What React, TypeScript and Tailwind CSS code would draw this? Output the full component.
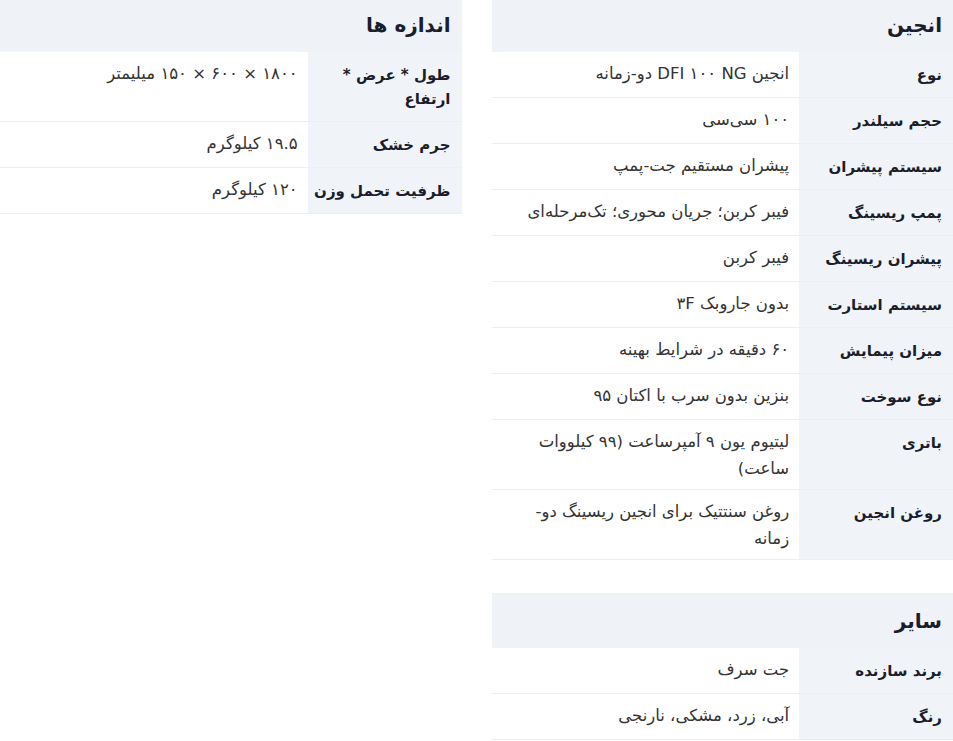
const engine = [
  ["نوع", "انجین DFI ۱۰۰ NG دو-زمانه"],
  ["حجم سیلندر", "۱۰۰ سی‌سی"],
  ["سیستم پیشران", "پیشران مستقیم جت-پمپ"],
  ["پمپ ریسینگ", "فیبر کربن؛ جریان محوری؛ تک‌مرحله‌ای"],
  ["پیشران ریسینگ", "فیبر کربن"],
  ["سیستم استارت", "بدون جاروبک ۳F"],
  ["میزان پیمایش", "۶۰ دقیقه در شرایط بهینه"],
  ["نوع سوخت", "بنزین بدون سرب با اکتان ۹۵"],
  ["باتری", "لیتیوم یون ۹ آمپرساعت (۹۹ کیلووات ساعت)"],
  ["روغن انجین", "روغن سنتتیک برای انجین ریسینگ دو-زمانه"],
];

const sizes = [
  ["طول * عرض * ارتفاع", "۱۸۰۰ × ۶۰۰ × ۱۵۰ میلیمتر"],
  ["جرم خشک", "۱۹.۵ کیلوگرم"],
  ["ظرفیت تحمل وزن", "۱۲۰ کیلوگرم"],
];

const other = [
  ["برند سازنده", "جت سرف"],
  ["رنگ", "آبی، زرد، مشکی، نارنجی"],
];

function SpecTable({ title, rows }: { title: string; rows: string[][] }) {
  return (
    <div>
      <div className="h-[55px] bg-[#eff3f8] flex items-center px-[11px]">
        <h3 className="text-[20px] font-bold text-[#1a1d2b]">{title}</h3>
      </div>
      <table className="w-full border-collapse table-fixed">
        <tbody>
          {rows.map(([k, v], i) => (
            <tr key={i} className="border-b border-[#eeeeee]">
              <th className="w-1/3 bg-[#f0f4f9] text-right align-top pr-[11px] pl-[2px] pt-[11px] pb-[10px] text-[15px] leading-[24px] font-bold text-[#1a1d2b]">
                {k}
              </th>
              <td className="text-right align-top pr-[10px] pl-[14px] pt-[8px] pb-[7px] text-[16.5px] leading-[27px] text-[#333333]">
                {v}
              </td>
            </tr>
          ))}
        </tbody>
      </table>
    </div>
  );
}

export default function App() {
  return (
    <div
      dir="rtl"
      className="bg-white min-h-screen overflow-hidden"
      style={{ fontFamily: '"DejaVu Sans", sans-serif' }}
    >
      <div className="-mt-[3px] grid grid-cols-2 gap-[30px] items-start">
        <div className="flex flex-col gap-[33px]">
          <SpecTable title="انجین" rows={engine} />
          <SpecTable title="سایر" rows={other} />
        </div>
        <SpecTable title="اندازه ها" rows={sizes} />
      </div>
    </div>
  );
}
